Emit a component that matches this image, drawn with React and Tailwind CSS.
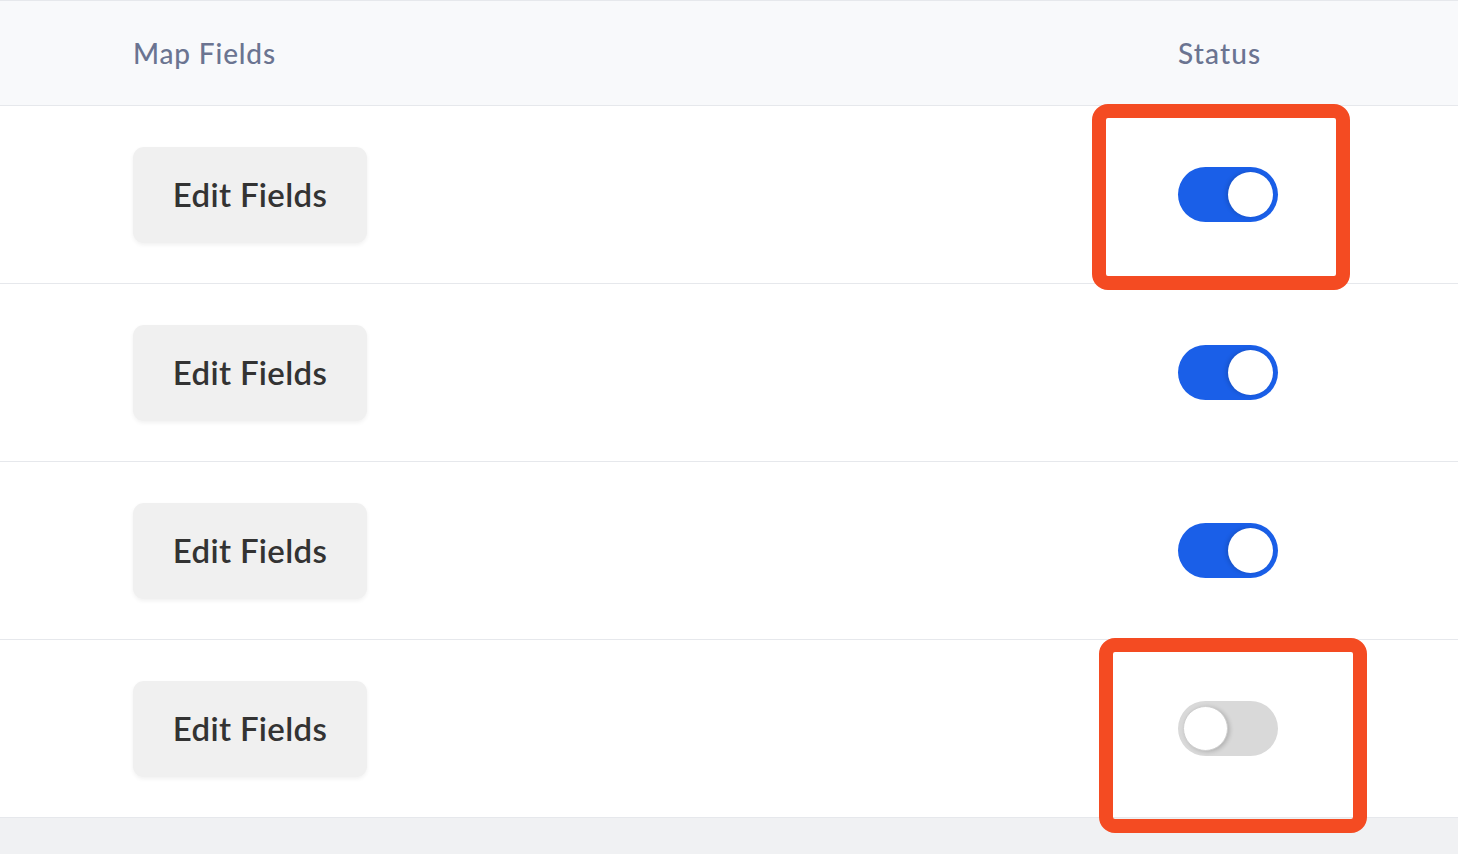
import React from "react";

const rows = [true, true, true, false];

function Toggle({ on }) {
  return (
    <div
      className={[
        "relative h-[55px] w-[100px] rounded-full",
        on ? "bg-[#1a5fe8]" : "bg-[#d9d9d9]",
      ].join(" ")}
    >
      <div
        className={[
          "absolute top-[5px] h-[45px] w-[45px] rounded-full bg-white",
          on
            ? "right-[5px] shadow-[-2px_0_4px_rgba(0,0,0,0.15)]"
            : "left-[5px] border border-[#cfcfcf] shadow-[2px_1px_4px_rgba(0,0,0,0.18)]",
        ].join(" ")}
      />
    </div>
  );
}

export default function App() {
  return (
    <div
      className="relative h-[854px] w-[1458px] overflow-hidden bg-[#f0f1f3]"
      style={{ fontFamily: "Lato, 'Noto Sans', sans-serif" }}
    >
      <div className="flex h-[106px] items-center border-t border-b border-[#e6e8ec] bg-[#f8f9fb] pl-[133px]">
        <span className="flex-1 text-[28px] font-medium tracking-[0.03em] text-[#6b7491]">Map Fields</span>
        <span className="w-[280px] text-[28px] font-medium tracking-[0.04em] text-[#6b7491]">Status</span>
      </div>

      {rows.map((on, i) => (
        <div
          key={i}
          className="flex h-[178px] items-center border-b border-[#e6e8ec] bg-white pl-[133px]"
        >
          <div className="flex-1">
            <button
              type="button"
              className="h-[96px] w-[234px] rounded-[11px] bg-[#f0f0f0] text-[33px] font-semibold tracking-[0.01em] text-[#333333] shadow-[0_2px_4px_rgba(0,0,0,0.06)]"
            >
              Edit Fields
            </button>
          </div>
          <div className="w-[280px]">
            <Toggle on={on} />
          </div>
        </div>
      ))}

      <div className="pointer-events-none absolute left-[1092px] top-[104px] h-[186px] w-[258px] rounded-[16px] border-[14px] border-[#f44b22]" />
      <div className="pointer-events-none absolute left-[1099px] top-[638px] h-[195px] w-[268px] rounded-[16px] border-[14px] border-[#f44b22]" />
    </div>
  );
}
